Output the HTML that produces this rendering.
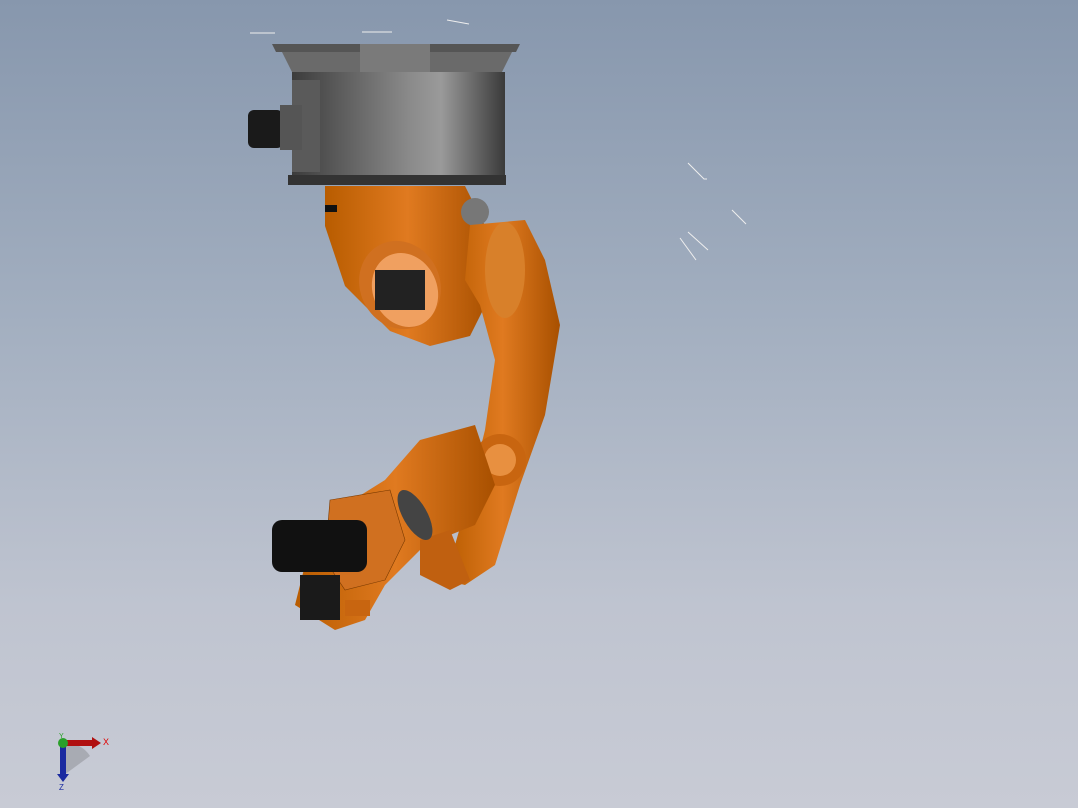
<!DOCTYPE html>
<html><head><meta charset="utf-8"><style>
html,body{margin:0;padding:0;width:1078px;height:808px;overflow:hidden}
body{background:linear-gradient(#8797ad 0%,#a3afc0 40%,#bfc4d0 75%,#c8cbd5 100%);font-family:"Liberation Sans",sans-serif}
svg{position:absolute;left:0;top:0}
</style></head><body>
<svg width="1078" height="808" viewBox="0 0 1078 808">
<defs>
<linearGradient id="cyl" x1="0" x2="1">
<stop offset="0" stop-color="#3c3c3c"/><stop offset="0.55" stop-color="#8a8a8a"/><stop offset="0.7" stop-color="#9a9a9a"/><stop offset="1" stop-color="#3a3a3a"/></linearGradient>
<linearGradient id="or" x1="0" x2="1">
<stop offset="0" stop-color="#b85c00"/><stop offset="0.5" stop-color="#e07a20"/><stop offset="1" stop-color="#a85000"/></linearGradient>
<radialGradient id="hole"><stop offset="0" stop-color="#f0a050"/><stop offset="1" stop-color="#c06a10"/></radialGradient>
</defs>
<!-- stray lines -->
<g stroke="#eee" stroke-width="1" fill="none">
<path d="M250 33h25M362 32h30M447 20l22 4M688 163l16 16h3M732 210l14 14M680 238l16 22M688 232l20 18"/>
</g>
<!-- base -->
<path d="M272 44h248l-4 8H276z" fill="#555"/>
<path d="M282 52h230l-10 20H292z" fill="#6a6a6a"/>
<path d="M360 44h70v34h-70z" fill="#7a7a7a"/>
<path d="M292 72h213v108H292z" fill="url(#cyl)"/>
<path d="M292 80h28v92h-28z" fill="#5a5a5a"/>
<path d="M288 175h218v10H288z" fill="#333"/>
<rect x="248" y="110" width="35" height="38" rx="6" fill="#1a1a1a"/>
<rect x="280" y="105" width="22" height="45" fill="#555"/>
<!-- first link -->
<path d="M325 186h140l20 40 5 70-20 40-40 10-40-15-45-45-20-60z" fill="url(#or)"/>
<ellipse cx="400" cy="285" rx="40" ry="45" transform="rotate(-25 400 285)" fill="#d07020"/>
<ellipse cx="405" cy="290" rx="32" ry="38" transform="rotate(-25 405 290)" fill="#f0a060"/>
<rect x="375" y="270" width="50" height="40" fill="#222"/>
<rect x="325" y="205" width="12" height="7" fill="#111"/>
<!-- second link -->
<circle cx="475" cy="212" r="14" fill="#777"/>
<path d="M470 225l55-5 20 40 15 65-15 90-25 70-25 80-30 20-20-5 20-70 20-80 10-70-15-55-15-25z" fill="url(#or)"/>
<ellipse cx="505" cy="270" rx="20" ry="48" fill="#d8802a"/>
<!-- joint -->
<circle cx="500" cy="460" r="26" fill="#c86510"/>
<circle cx="500" cy="460" r="16" fill="#e89040"/>
<!-- wrist -->
<path d="M420 440l55-15 20 60-20 40-50 20-40 40-20 35-30 10-40-25 10-40 40-60 40-25z" fill="url(#or)"/>
<path d="M330 500l60-10 15 50-20 40-40 10-20-30z" fill="#d07020" stroke="#7a3a00" stroke-width="0.6"/>
<path d="M420 540l30-10 20 50-20 10-30-15z" fill="#c06010"/>
<rect x="272" y="520" width="95" height="52" rx="10" fill="#111"/>
<rect x="300" y="575" width="40" height="45" fill="#1a1a1a"/>
<rect x="345" y="600" width="25" height="16" fill="#c86510"/>
<ellipse cx="415" cy="515" rx="12" ry="28" transform="rotate(-30 415 515)" fill="#444"/>
</svg>
<!-- triad -->
<svg width="120" height="80" style="left:40px;top:725px" viewBox="40 725 120 80">
<path d="M64 743 A28 28 0 0 1 90 756 L64 775z" fill="#a8abb3"/>
<path d="M64 743h25v3H64z" fill="#fff" opacity="0"/>
<path d="M64 740h28v6H64z" fill="#b01010"/><path d="M92 737l9 6-9 6z" fill="#b01010"/>
<path d="M60 744h6v30h-6z" fill="#1a2aa0"/><path d="M57 774h12l-6 8z" fill="#1a2aa0"/>
<circle cx="63" cy="743" r="5" fill="#2aa02a"/>
<text x="103" y="745" font-size="9" fill="#e00000" font-family="Liberation Sans">X</text>
<text x="59" y="790" font-size="8" fill="#1a2aa0" font-family="Liberation Sans">Z</text>
<text x="59" y="738" font-size="7" fill="#20a020" font-family="Liberation Sans">Y</text>
</svg>
</body></html>
